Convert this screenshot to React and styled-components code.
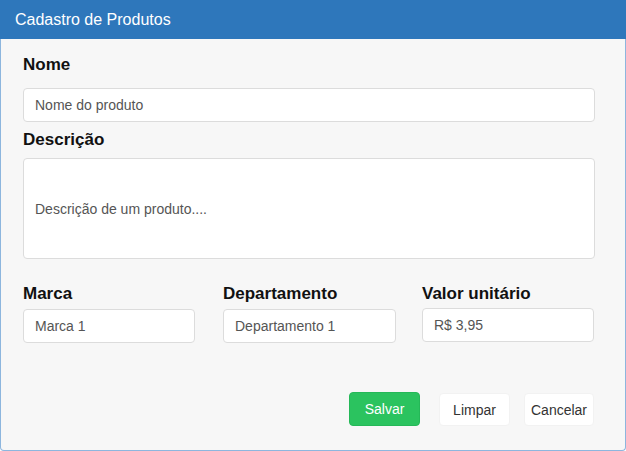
import React from "react";
import styled, { createGlobalStyle } from "styled-components";

const Global = createGlobalStyle`
  html, body { margin: 0; padding: 0; background: #ffffff; }
  body { font-family: "Liberation Sans", Arial, sans-serif; }
  * { box-sizing: border-box; }
`;

const Window = styled.div`
  width: 626px;
  height: 451px;
  display: flex;
  flex-direction: column;
`;

const Header = styled.div`
  height: 39px;
  flex: none;
  display: flex;
  align-items: center;
  padding-left: 15px;
  background: #2e77bb;
  color: #ffffff;
  font-size: 16px;
`;

const Body = styled.div`
  flex: 1;
  background: #f7f7f7;
  border: 1px solid #8db6de;
  border-top: none;
  border-radius: 0 0 4px 4px;
  padding: 16px 30px 0 22px;
  display: flex;
  flex-direction: column;
`;

const Field = styled.div`
  display: flex;
  flex-direction: column;
  margin-top: ${(p) => p.$top || 0}px;
`;

const Label = styled.label`
  font-size: 17px;
  font-weight: bold;
  line-height: 20px;
  color: #111111;
  margin-bottom: ${(p) => p.$gap}px;
`;

const Input = styled.input`
  height: 34px;
  width: ${(p) => (p.$width ? `${p.$width}px` : "100%")};
  border: 1px solid #dcdcdc;
  border-radius: 4px;
  background: #ffffff;
  padding: 0 11px;
  font-family: "Liberation Sans", Arial, sans-serif;
  font-size: 14px;
  color: #555555;
  outline: none;
`;

const TextBox = styled.div`
  height: 101px;
  border: 1px solid #dcdcdc;
  border-radius: 4px;
  background: #ffffff;
  padding: 0 11px;
  display: flex;
  align-items: center;
  font-size: 14px;
  color: #555555;
`;

const Row = styled.div`
  display: grid;
  grid-template-columns: 200px 199px 172px;
  margin-top: 25px;
`;

const Actions = styled.div`
  display: flex;
  justify-content: flex-end;
  align-items: flex-start;
  margin-top: 49px;
  margin-right: 1px;
`;

const Button = styled.button`
  height: ${(p) => (p.$primary ? 34 : 33)}px;
  width: ${(p) => p.$width}px;
  margin-left: ${(p) => p.$gap || 0}px;
  margin-top: ${(p) => (p.$primary ? 0 : 1)}px;
  border: 1px solid ${(p) => (p.$primary ? "#25b858" : "#f2f2f2")};
  border-radius: 4px;
  background: ${(p) => (p.$primary ? "#2bc35f" : "#ffffff")};
  color: ${(p) => (p.$primary ? "#ffffff" : "#333333")};
  font-family: "Liberation Sans", Arial, sans-serif;
  font-size: 14px;
  padding: 0;
  display: flex;
  align-items: center;
  justify-content: center;
  cursor: pointer;
`;

export default function App() {
  return (
    <>
      <Global />
      <Window>
        <Header>Cadastro de Produtos</Header>
        <Body>
          <Field>
            <Label $gap={13}>Nome</Label>
            <Input defaultValue="Nome do produto" readOnly />
          </Field>
          <Field $top={8}>
            <Label $gap={8}>Descrição</Label>
            <TextBox>Descrição de um produto....</TextBox>
          </Field>
          <Row>
            <Field>
              <Label $gap={5}>Marca</Label>
              <Input $width={172} defaultValue="Marca 1" readOnly />
            </Field>
            <Field>
              <Label $gap={5}>Departamento</Label>
              <Input $width={173} defaultValue="Departamento 1" readOnly />
            </Field>
            <Field>
              <Label $gap={4}>Valor unitário</Label>
              <Input $width={172} defaultValue="R$ 3,95" readOnly />
            </Field>
          </Row>
          <Actions>
            <Button $primary $width={71}>Salvar</Button>
            <Button $width={71} $gap={19}>Limpar</Button>
            <Button $width={70} $gap={14}>Cancelar</Button>
          </Actions>
        </Body>
      </Window>
    </>
  );
}
